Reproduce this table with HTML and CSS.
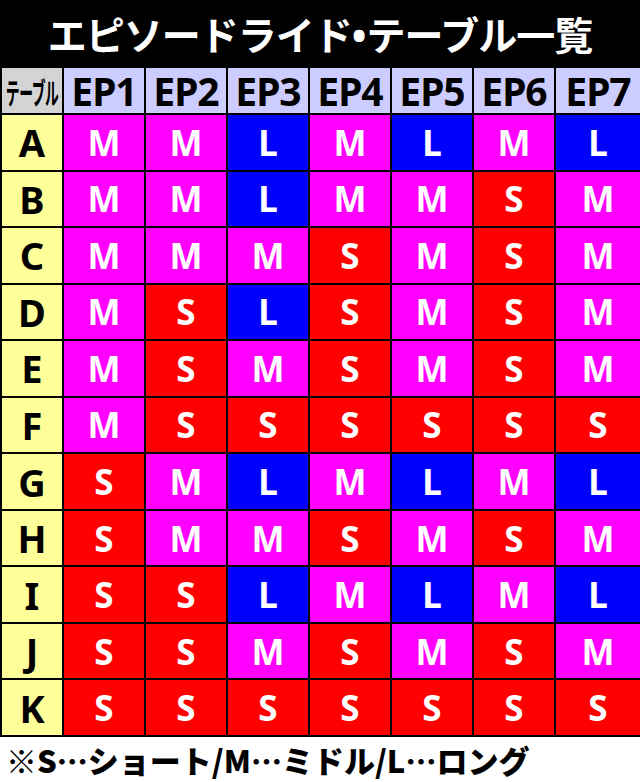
FILE: index.html
```html
<!DOCTYPE html>
<html lang="ja">
<head>
<meta charset="utf-8">
<link rel="stylesheet" href="styles.css">
</head>
<body>
<div class="page">
  <h1 class="title">エピソードライド<span class="dot">•</span>テーブル一覧</h1>
  <div class="grid">
    <div class="corner"><span>テーブル</span></div>
    <div class="ep">EP1</div>
    <div class="ep">EP2</div>
    <div class="ep">EP3</div>
    <div class="ep">EP4</div>
    <div class="ep">EP5</div>
    <div class="ep">EP6</div>
    <div class="ep">EP7</div>

    <div class="rh">A</div><div class="c m">M</div><div class="c m">M</div><div class="c l">L</div><div class="c m">M</div><div class="c l">L</div><div class="c m">M</div><div class="c l">L</div>
    <div class="rh">B</div><div class="c m">M</div><div class="c m">M</div><div class="c l">L</div><div class="c m">M</div><div class="c m">M</div><div class="c s">S</div><div class="c m">M</div>
    <div class="rh">C</div><div class="c m">M</div><div class="c m">M</div><div class="c m">M</div><div class="c s">S</div><div class="c m">M</div><div class="c s">S</div><div class="c m">M</div>
    <div class="rh">D</div><div class="c m">M</div><div class="c s">S</div><div class="c l">L</div><div class="c s">S</div><div class="c m">M</div><div class="c s">S</div><div class="c m">M</div>
    <div class="rh">E</div><div class="c m">M</div><div class="c s">S</div><div class="c m">M</div><div class="c s">S</div><div class="c m">M</div><div class="c s">S</div><div class="c m">M</div>
    <div class="rh">F</div><div class="c m">M</div><div class="c s">S</div><div class="c s">S</div><div class="c s">S</div><div class="c s">S</div><div class="c s">S</div><div class="c s">S</div>
    <div class="rh">G</div><div class="c s">S</div><div class="c m">M</div><div class="c l">L</div><div class="c m">M</div><div class="c l">L</div><div class="c m">M</div><div class="c l">L</div>
    <div class="rh">H</div><div class="c s">S</div><div class="c m">M</div><div class="c m">M</div><div class="c s">S</div><div class="c m">M</div><div class="c s">S</div><div class="c m">M</div>
    <div class="rh">I</div><div class="c s">S</div><div class="c s">S</div><div class="c l">L</div><div class="c m">M</div><div class="c l">L</div><div class="c m">M</div><div class="c l">L</div>
    <div class="rh">J</div><div class="c s">S</div><div class="c s">S</div><div class="c m">M</div><div class="c s">S</div><div class="c m">M</div><div class="c s">S</div><div class="c m">M</div>
    <div class="rh">K</div><div class="c s">S</div><div class="c s">S</div><div class="c s">S</div><div class="c s">S</div><div class="c s">S</div><div class="c s">S</div><div class="c s">S</div>
  </div>
  <p class="note">※S…ショート/M…ミドル/L…ロング</p>
</div>
</body>
</html>
```

FILE: styles.css
```css
html, body {
  margin: 0;
  padding: 0;
  background: #ffffff;
}
.page {
  width: 640px;
  height: 782px;
  overflow: hidden;
  font-family: "Noto Sans", "Noto Sans CJK JP", sans-serif;
}
.title {
  margin: 0;
  height: 66px;
  background: #000000;
  color: #ffffff;
  font-family: "Noto Sans CJK JP", sans-serif;
  font-weight: 700;
  font-size: 39px;
  line-height: 66px;
  text-align: center;
  letter-spacing: -1px;
}
.dot {
  font-family: "Noto Sans", sans-serif;
  font-weight: 700;
  letter-spacing: 0;
}
.grid {
  display: grid;
  grid-template-columns: 60px repeat(6, 80px) 1fr;
  grid-template-rows: 45px repeat(11, 1fr);
  gap: 2px;
  padding: 2px 0 2px 2px;
  height: 671px;
  box-sizing: border-box;
  background: #000000;
}
.grid > div {
  display: flex;
  align-items: center;
  justify-content: center;
}
.corner {
  background: #d4d4d4;
  color: #000;
}
.corner span {
  display: inline-block;
  font-family: "Noto Sans CJK JP", sans-serif;
  font-weight: 700;
  font-size: 30px;
  line-height: 1;
  transform: scaleX(0.46);
  white-space: nowrap;
  letter-spacing: -1px;
}
.ep {
  background: #ccccff;
  color: #000;
  font-family: "Noto Sans", sans-serif;
  font-weight: 700;
  font-size: 39px;
  line-height: 1;
  white-space: nowrap;
  letter-spacing: -1px;
}
.rh {
  background: #ffff99;
  color: #000;
  font-weight: 700;
  font-size: 38px;
  line-height: 1;
}
.c {
  color: #ffffff;
  font-weight: 700;
  font-size: 35px;
  line-height: 1;
}
.m { background: #ff00ff; }
.l { background: #0000ff; }
.s { background: #ff0000; }
.note {
  margin: 0;
  padding-left: 6px;
  height: 45px;
  font-family: "Noto Sans CJK JP", sans-serif;
  font-weight: 900;
  font-size: 31px;
  line-height: 46px;
  color: #000;
  white-space: nowrap;
}
```
